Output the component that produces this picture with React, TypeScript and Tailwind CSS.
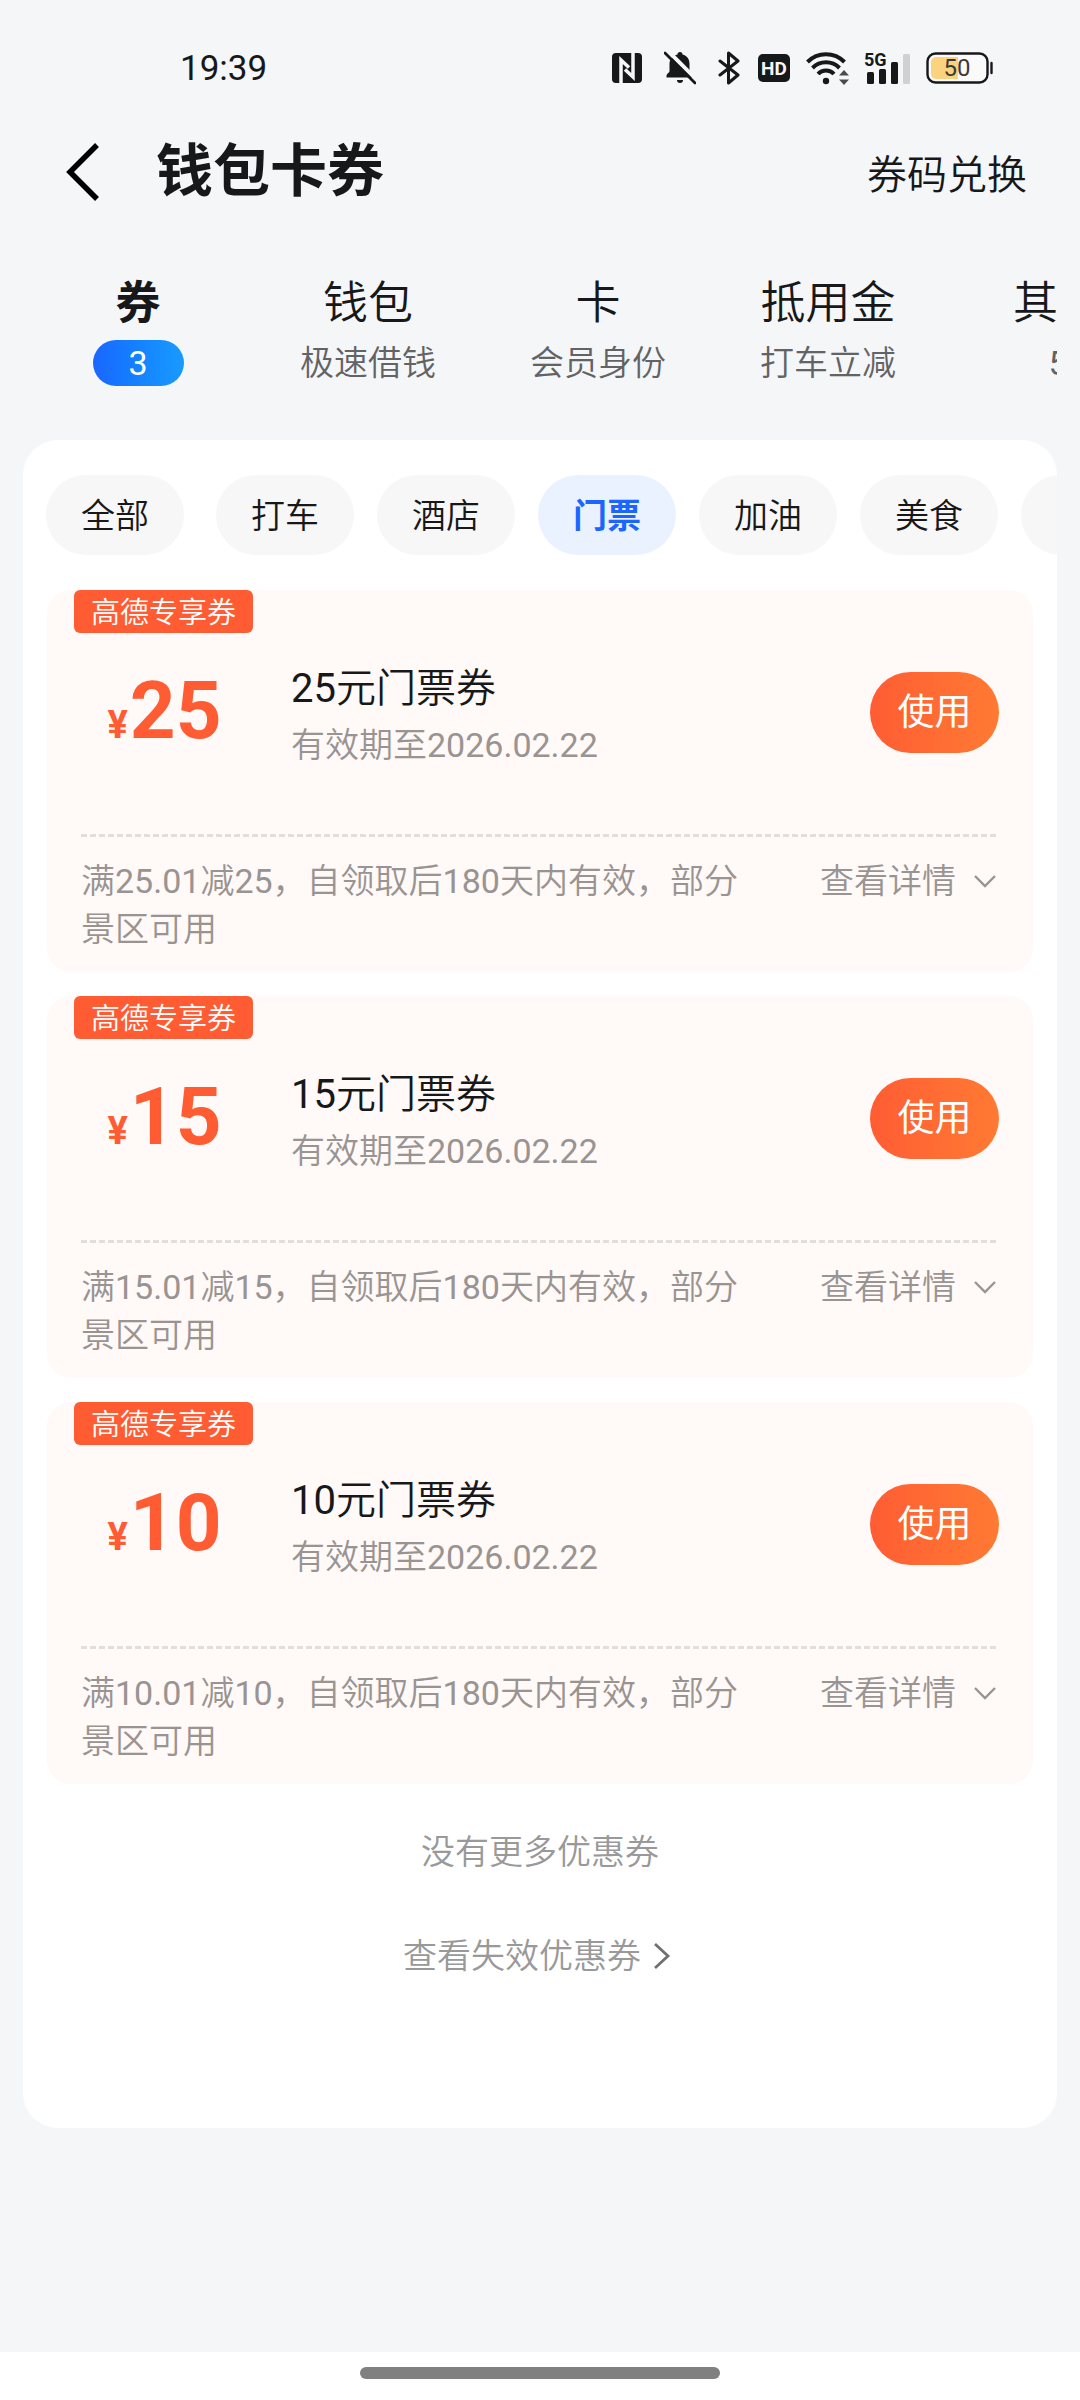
const tabs = [
  { title: "券", sub: "3", active: true },
  { title: "钱包", sub: "极速借钱" },
  { title: "卡", sub: "会员身份" },
  { title: "抵用金", sub: "打车立减" },
  { title: "其他", sub: "5" },
];

const categories = ["打车", "酒店", "门票", "加油", "美食", "景点"];

const coupons = [
  { amount: 25, condition: "满25.01减25，自领取后180天内有效，部分景区可用" },
  { amount: 15, condition: "满15.01减15，自领取后180天内有效，部分景区可用" },
  { amount: 10, condition: "满10.01减10，自领取后180天内有效，部分景区可用" },
];

const StatusBar = () => {
  return (
    <div className="flex h-[136px] items-center justify-between pl-[180px] pr-[86px] text-[#17181a]">
      <span className="pt-[2px] text-[35px] leading-[44px]">19:39</span>
      <div className="flex items-center">
        {/* NFC */}
        <svg className="mr-[22px]" width="30" height="30" viewBox="0 0 30 30">
          <rect width="30" height="30" rx="4" fill="currentColor" />
          <path
            d="M9 30V7l8 7.500M21 0v24l-8-7.500"
            fill="none"
            stroke="#f5f6f8"
            strokeWidth="3.500"
          />
        </svg>
        {/* Muted bell */}
        <svg className="mr-[22px]" width="32" height="34" viewBox="0 0 32 34">
          <path
            d="M13.500 3.500a2.500 2.500 0 0 1 5 0c4.500 1 7 4.500 7 9.500v7c0 2 3 2.500 3 5v1.500h-26V25c0-2.500 3-3 3-5v-7c0-5 3.500-8.500 8-9.500z"
            fill="currentColor"
          />
          <path d="M13 29h6a3 3 0 0 1-6 0z" fill="currentColor" />
          <path d="M4 0l30 30" stroke="#f5f6f8" strokeWidth="4" />
          <path
            d="M1 2l30 30"
            stroke="currentColor"
            strokeWidth="2.800"
            strokeLinecap="round"
          />
        </svg>
        {/* Bluetooth */}
        <svg className="mr-[18px]" width="22" height="34" viewBox="0 0 22 34">
          <path
            d="M2 10l18 14-9.500 8V2L20 10 2 24"
            fill="none"
            stroke="currentColor"
            strokeWidth="3"
            strokeLinejoin="round"
            strokeLinecap="round"
          />
        </svg>
        {/* HD */}
        <span className="mr-[16px] flex h-[28px] w-[32px] items-center justify-center rounded-[5px] bg-[#17181a] text-[19px] font-bold leading-none text-[#f5f6f8]">
          HD
        </span>
        {/* Wi-Fi */}
        <svg className="mr-[14px]" width="44" height="34" viewBox="0 0 44 34">
          <g fill="none" stroke="currentColor" strokeWidth="4">
            <path d="M1.500 11a26 26 0 0 1 37 0" />
            <path d="M6.500 17a19 19 0 0 1 27 0" />
            <path d="M12 23a11 11 0 0 1 16 0" />
          </g>
          <circle cx="20" cy="30" r="3.200" fill="currentColor" />
          <path d="M33 24.500l5-5.500 5 5.500zM33 28.500h10l-5 5.500z" fill="#4a4b4d" />
        </svg>
        {/* 5G signal */}
        <svg className="mr-[16px]" width="46" height="38" viewBox="0 -2 46 38">
          <text
            x="0"
            y="15"
            fontSize="18"
            fontWeight="700"
            fontFamily="Roboto, sans-serif"
            fill="currentColor"
          >
            5G
          </text>
          <g fill="currentColor">
            <rect x="3" y="21" width="7" height="12" rx="1.500" />
            <rect x="15" y="18" width="7" height="15" rx="1.500" />
            <rect x="27" y="11" width="7" height="22" rx="1.500" />
          </g>
          <rect x="39" y="3" width="7" height="30" rx="1.500" fill="#d0d1d3" />
        </svg>
        {/* Battery */}
        <svg width="68" height="32" viewBox="0 0 68 32">
          <rect
            x="1.500"
            y="1.500"
            width="60"
            height="29"
            rx="8"
            fill="#fafafa"
            stroke="currentColor"
            strokeWidth="2.400"
          />
          <path d="M10 5h22v22H10a5 5 0 0 1-5-5V10a5 5 0 0 1 5-5z" fill="#fbd27d" />
          <path
            d="M65.500 11v10"
            stroke="currentColor"
            strokeWidth="2.400"
            strokeLinecap="round"
          />
          <text
            x="31"
            y="24"
            textAnchor="middle"
            fontSize="24"
            fontFamily="Roboto, sans-serif"
            fill="#3b3a36"
          >
            50
          </text>
        </svg>
      </div>
    </div>
  );
};

const Header = () => {
  return (
    <header className="flex h-[72px] items-center justify-between pl-[66px] pr-[53px] text-[#17181a]">
      <div className="flex items-center gap-[56px]">
        <button type="button" aria-label="返回">
          <svg width="34" height="58" viewBox="0 0 34 58">
            <path
              d="M31 2L4 29l27 27"
              fill="none"
              stroke="#000"
              strokeWidth="5.500"
            />
          </svg>
        </button>
        <h1 className="font-[Roboto,'Noto_Sans_CJK_SC',sans-serif] text-[57px] font-bold leading-[68px]">
          钱包卡券
        </h1>
      </div>
      <a href="#redeem" className="pt-[8px] text-[40px] leading-[52px]">
        券码兑换
      </a>
    </header>
  );
};

const Tabs = () => {
  return (
    <nav className="mx-[23px] mt-[68px] flex overflow-hidden pb-[54px]">
      {tabs.map((tab) => (
        <button
          key={tab.title}
          type="button"
          className="flex w-[230px] shrink-0 flex-col items-center gap-[8px]"
        >
          <span
            className={
              tab.active
                ? "font-[Roboto,'Noto_Sans_CJK_SC',sans-serif] text-[45px] font-bold leading-[56px] text-[#17181a]"
                : "text-[45px] leading-[56px] text-[#17181a]"
            }
          >
            {tab.title}
          </span>
          <span
            className={
              tab.active
                ? "h-[46px] w-[91px] rounded-full bg-gradient-to-r from-[#1a66ff] to-[#1a9bff] text-[34px] leading-[46px] text-white"
                : "text-[34px] leading-[46px] text-[#626365]"
            }
          >
            {tab.sub}
          </span>
        </button>
      ))}
    </nav>
  );
};

const Chip = ({ label, active }: { label: string; active?: boolean }) => {
  return (
    <button
      type="button"
      className={
        active
          ? "h-[80px] w-[138px] shrink-0 rounded-full bg-[#ebf2ff] pt-[2px] font-[Roboto,'Noto_Sans_CJK_SC',sans-serif] text-[34px] font-bold leading-[46px] text-[#1a66ff]"
          : "h-[80px] w-[138px] shrink-0 rounded-full bg-[#f7f7f7] pt-[2px] text-[34px] leading-[46px] text-[#17181a]"
      }
    >
      {label}
    </button>
  );
};

const Coupon = ({ amount, condition }: { amount: number; condition: string }) => {
  return (
    <li className="rounded-[24px] bg-[#fff9f7] pb-[19px]">
      <span className="ml-[27px] block h-[43px] w-[179px] rounded-[6px] bg-[#ff5c33] text-center text-[29px] leading-[46px] text-white">
        高德专享券
      </span>

      <div className="mt-[24px] flex items-center pr-[34px]">
        <p className="w-[235px] shrink-0 pb-1 text-center text-[80px] font-bold leading-[90px] text-[#ff5c33]">
          <span className="mr-[2px] text-[38px] leading-none">¥</span>
          {amount}
        </p>
        <div className="flex-1 pl-[9px]">
          <h2 className="text-[40px] leading-[64px] text-[#17181a]">
            {`${amount}元门票券`}
          </h2>
          <p className="mt-px text-[34px] leading-[46px] text-[#999492]">
            有效期至2026.02.22
          </p>
        </div>
        <button
          type="button"
          className="h-[81px] w-[129px] rounded-full bg-gradient-to-r from-[#ff5c33] to-[#ff7a33] font-[Roboto,'Noto_Sans_CJK_SC',sans-serif] text-[37px] leading-[48px] text-white"
        >
          使用
        </button>
      </div>

      <div className="mx-[34px] mt-[66px] h-[3px] bg-[repeating-linear-gradient(90deg,#e3dedc_0_6px,transparent_6px_9px)]" />

      <div className="mx-[34px] mt-[20px] flex items-start justify-between text-[34px] leading-[48px] text-[#999492]">
        <p className="w-[680px]">{condition}</p>
        <button type="button" className="flex shrink-0 items-center gap-[17px]">
          查看详情
          <svg width="26" height="16" viewBox="0 0 26 16">
            <path
              d="M2 3l10 10L22 3"
              fill="none"
              stroke="currentColor"
              strokeWidth="2.400"
            />
          </svg>
        </button>
      </div>
    </li>
  );
};

export default function App() {
  return (
    <div
      lang="zh-CN"
      className="flex min-h-screen flex-col bg-[#f5f6f8] font-[Roboto,'Noto_Sans_CJK_SC_DemiLight','Noto_Sans_CJK_SC',sans-serif]"
    >
      <StatusBar />
      <Header />
      <Tabs />

      <main className="mx-[23px] rounded-[35px] bg-white pb-[149px] pt-[35px]">
        <div className="flex gap-[32px] overflow-hidden pl-[23px]">
          <Chip label="全部" />
          <div className="flex gap-[23px]">
            {categories.map((name) => (
              <Chip key={name} label={name} active={name === "门票"} />
            ))}
          </div>
        </div>

        <ul className="mx-[24px] mt-[35px] flex flex-col gap-6">
          {coupons.map((coupon) => (
            <Coupon key={coupon.amount} {...coupon} />
          ))}
        </ul>

        <p className="mt-[45px] text-center text-[34px] leading-[46px] text-[#999]">
          没有更多优惠券
        </p>
        <a
          href="#expired"
          className="mt-[58px] flex items-center justify-center gap-[12px] pr-[6px] text-[34px] leading-[46px] text-[#999]"
        >
          查看失效优惠券
          <svg width="18" height="28" viewBox="0 0 18 28">
            <path
              d="M2 2l13 12L2 26"
              fill="none"
              stroke="#707070"
              strokeWidth="2.800"
            />
          </svg>
        </a>
      </main>

      <footer className="mt-auto flex h-[48px] justify-center bg-white pt-[15px]">
        <div className="h-[12px] w-1/3 rounded-full bg-[#808080]" />
      </footer>
    </div>
  );
}
